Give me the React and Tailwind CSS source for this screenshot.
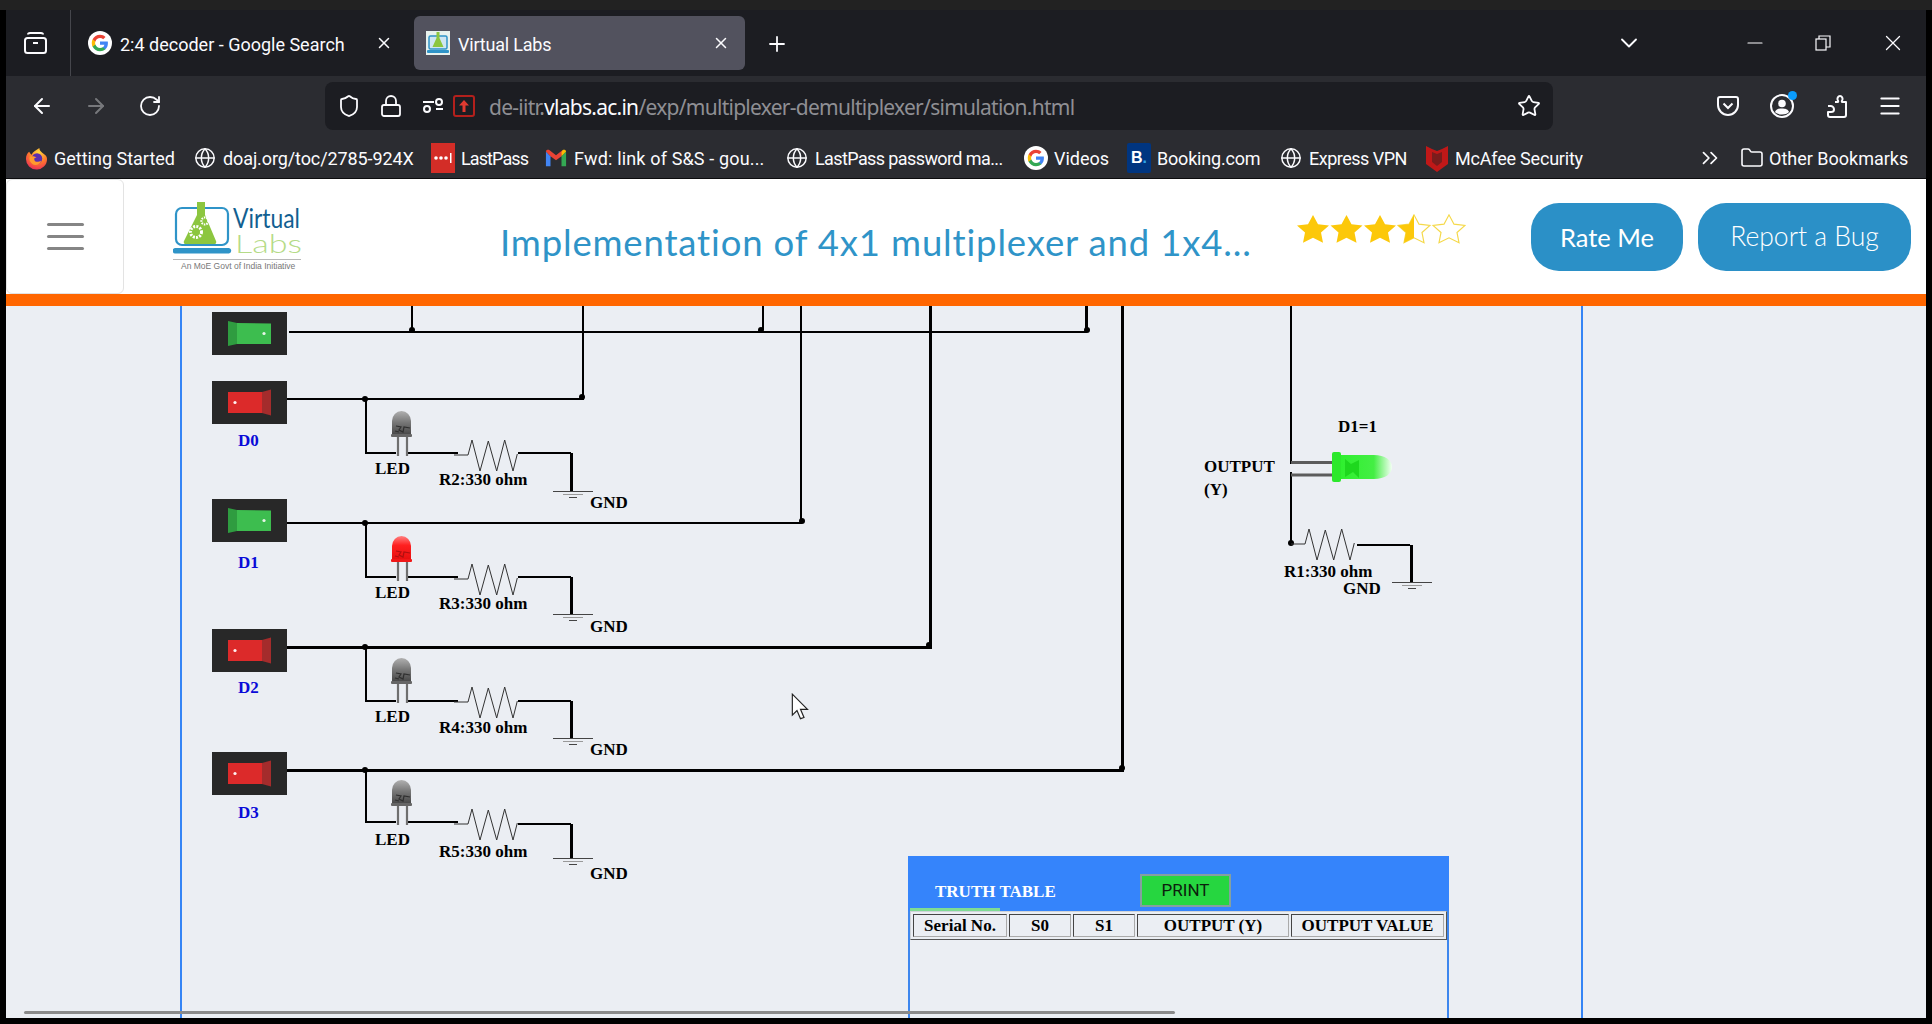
import { ArrowLeft, ArrowRight, RotateCw, Shield, Lock, Star, ChevronDown, ChevronsRight, Plus, X, Minus, Menu, Globe, Folder } from 'lucide-react';

const chromeFont = "font-['Roboto',sans-serif]";
const serif = "font-['Liberation_Serif',serif]";

function GoogleIcon() {
  return (
    <svg viewBox="0 0 24 24" className="w-[24px] h-[24px] shrink-0">
      <circle cx="12" cy="12" r="12" fill="#fff" />
      <g transform="translate(3 3) scale(0.75)">
        <path fill="#4285F4" d="M22.56 12.25c0-.78-.07-1.53-.2-2.25H12v4.26h5.92c-.26 1.37-1.04 2.53-2.21 3.31v2.77h3.57c2.08-1.92 3.28-4.74 3.28-8.09z" />
        <path fill="#34A853" d="M12 23c2.97 0 5.46-.98 7.28-2.66l-3.57-2.77c-.98.66-2.23 1.06-3.71 1.06-2.86 0-5.29-1.93-6.16-4.53H2.18v2.84C3.99 20.53 7.7 23 12 23z" />
        <path fill="#FBBC05" d="M5.84 14.09c-.22-.66-.35-1.36-.35-2.09s.13-1.43.35-2.09V7.07H2.18C1.43 8.55 1 10.22 1 12s.43 3.45 1.18 4.93l2.85-2.22.81-.62z" />
        <path fill="#EA4335" d="M12 5.38c1.62 0 3.06.56 4.21 1.64l3.15-3.15C17.45 2.09 14.97 1 12 1 7.7 1 3.99 3.47 2.18 7.07l3.66 2.84c.87-2.6 3.3-4.53 6.16-4.53z" />
      </g>
    </svg>
  );
}

function FirefoxIcon() {
  return (
    <svg viewBox="0 0 24 24" className="w-[23px] h-[25px] shrink-0">
      <defs>
        <radialGradient id="ffo" cx="0.6" cy="0.2" r="0.9">
          <stop offset="0" stopColor="#ffd83d" />
          <stop offset="0.5" stopColor="#ff7a2b" />
          <stop offset="1" stopColor="#e8215f" />
        </radialGradient>
      </defs>
      <path d="M12 23.500a11 11 0 0 1-11-11C1 9 2.500 6 4.500 5c.5 1.500 1.500 2.500 2.500 3 1-3 4-4 8-7 0 2 1 3 3 5 3 2 5 3.500 5 6.500A10.500 11 0 0 1 12 23.500z" fill="url(#ffo)" />
      <circle cx="12.500" cy="12" r="5.500" fill="#5b2fb0" />
      <path d="M5 10c3-1 6 0 7 1-2 0-3 1-2 3s4 2 7 0c-1 4-6 6-9 4-3-2-4-5-3-8z" fill="#ff9a2e" />
    </svg>
  );
}

function LabsFavicon() {
  return (
    <svg viewBox="0 0 24 24" className="w-[24px] h-[24px] shrink-0">
      <rect width="24" height="24" fill="#e8f2ee" />
      <rect x="3" y="5" width="18" height="13" rx="1.500" fill="#cfe6f2" stroke="#2f94c8" strokeWidth="1.500" />
      <rect x="1" y="19" width="22" height="3" rx="1" fill="#2f94c8" />
      <path d="M10.500 1h3v6l4 9h-11l4-9z" fill="#8cc63f" />
    </svg>
  );
}

function LastPassIcon() {
  return (
    <svg viewBox="0 0 24 30" className="w-[24px] h-[30px] shrink-0">
      <rect width="24" height="30" fill="#d32d27" />
      <circle cx="5" cy="15" r="1.800" fill="#fff" />
      <circle cx="10" cy="15" r="1.800" fill="#fff" />
      <circle cx="15" cy="15" r="1.800" fill="#fff" />
      <rect x="19" y="10" width="1.500" height="10" fill="#fff" />
    </svg>
  );
}

function GmailIcon() {
  return (
    <svg viewBox="0 0 24 24" className="w-[22px] h-[24px] shrink-0">
      <path d="M1 5v16h5V10z" fill="#4285f4" />
      <path d="M23 5v16h-5V10z" fill="#34a853" />
      <path d="M1 5c0-2 2.500-2.500 4-1.500l7 5.500 7-5.500L18 10l-6 4.500L6 10z" fill="#ea4335" />
      <path d="M18 10l5-5c0-2-2.500-2.500-4-1.500L18 6z" fill="#fbbc04" />
    </svg>
  );
}

function BookingIcon() {
  return (
    <div className="w-[24px] h-[30px] shrink-0 rounded-[2px] bg-[#003580] flex items-center justify-center font-['Liberation_Sans',sans-serif] font-bold text-[16px] text-white">
      B<span className="text-[#2fa4e7]">.</span>
    </div>
  );
}

function McAfeeIcon() {
  return (
    <svg viewBox="0 0 22 28" className="w-[22px] h-[28px] shrink-0">
      <path d="M0 2l6 3 5 2 5-2 6-3v18l-11 8L0 20z" fill="#c01818" />
      <path d="M6 8l5 2 5-2v10l-5 4-5-4z" fill="#7a1c1c" />
    </svg>
  );
}

function ArchiveIcon() {
  return (
    <svg viewBox="0 0 25 24" fill="none" stroke="#fbfbfe" strokeWidth="2" className="w-[25px] h-[24px] shrink-0">
      <path d="M5 3.500c0-1 1-1.500 2-1.500h11c1 0 2 .5 2 1.500" />
      <rect x="2" y="7" width="21" height="15" rx="2.500" />
      <path d="M10 12h5" />
    </svg>
  );
}

function PermIcon() {
  return (
    <svg viewBox="0 0 24 24" fill="none" stroke="#fbfbfe" strokeWidth="2" className="w-[24px] h-[24px] shrink-0">
      <path d="M2 8h11M15 15h7" />
      <circle cx="18" cy="8" r="3" />
      <circle cx="6" cy="15" r="3" />
    </svg>
  );
}

function UploadIcon() {
  return (
    <div className="w-[22px] h-[22px] shrink-0 rounded-[3px] border-2 border-[#b3201c] flex items-center justify-center">
      <svg viewBox="0 0 14 14" className="w-[14px] h-[14px]">
        <path d="M7 1l5 5.500H8.500V13h-3V6.500H2z" fill="#e03a30" />
      </svg>
    </div>
  );
}

function PocketIcon() {
  return (
    <svg viewBox="0 0 24 24" fill="none" stroke="#fbfbfe" strokeWidth="2" className="w-[24px] h-[24px] shrink-0">
      <path d="M4 3h16a2 2 0 0 1 2 2v6a10 10 0 0 1-20 0V5a2 2 0 0 1 2-2z" />
      <path d="M7.500 9.500L12 14l4.500-4.500" />
    </svg>
  );
}

function AccountIcon() {
  return (
    <div className="relative w-[24px] h-[24px] shrink-0">
      <svg viewBox="0 0 24 24" fill="none" className="w-[24px] h-[24px]">
        <circle cx="12" cy="12" r="11" stroke="#fbfbfe" strokeWidth="2" />
        <circle cx="12" cy="9.500" r="3.800" fill="#fbfbfe" />
        <path d="M5 18c1-3 4-3.500 7-3.500s6 .5 7 3.500c-2 1.800-4 2.500-7 2.500s-5-.7-7-2.500z" fill="#fbfbfe" />
      </svg>
      <span className="absolute -top-[3px] -right-[3px] w-[9px] h-[9px] rounded-full bg-[#0a9dff]" />
    </div>
  );
}

function ExtensionIcon() {
  return (
    <svg viewBox="0 0 24 24" fill="none" stroke="#fbfbfe" strokeWidth="2" strokeLinejoin="round" className="w-[24px] h-[24px] shrink-0">
      <path d="M10 8h2.500c1 0 .8-1 .3-1.800C11.800 4.500 13 2 15 2s3.200 2.500 2.200 4.200c-.5.8-.7 1.800.3 1.800H21v13a2 2 0 0 1-2 2H5a2 2 0 0 1-2-2v-3h3c2 0 3-1.300 3-2.500S8 12 6 12H3" />
    </svg>
  );
}

const BOOKMARKS = [
  { icon: <FirefoxIcon />, label: 'Getting Started', cls: 'ml-[19px]', w: 'w-[120px]' },
  { icon: <Globe size={22} strokeWidth={1.6} />, label: 'doaj.org/toc/2785-924X', cls: 'ml-[20px]', w: 'w-[191px] tracking-[-0.1px]' },
  { icon: <LastPassIcon />, label: 'LastPass', cls: 'ml-[18px]', w: 'w-[64px] tracking-[-0.9px]' },
  { icon: <GmailIcon />, label: 'Fwd: link of S&S - gou...', cls: 'ml-[20px]', w: 'w-[190px] tracking-[0.15px]' },
  { icon: <Globe size={22} strokeWidth={1.6} />, label: 'LastPass password ma...', cls: 'ml-[22px]', w: 'w-[188px] tracking-[-0.6px]' },
  { icon: <GoogleIcon />, label: 'Videos', cls: 'ml-[22px]', w: 'w-[53px]' },
  { icon: <BookingIcon />, label: 'Booking.com', cls: 'ml-[21px]', w: 'w-[102px] tracking-[-0.2px]' },
  { icon: <Globe size={22} strokeWidth={1.6} />, label: 'Express VPN', cls: 'ml-[21px]', w: 'w-[97px] tracking-[-0.5px]' },
  { icon: <McAfeeIcon />, label: 'McAfee Security', cls: 'ml-[20px]', w: 'w-[128px] tracking-[-0.2px]' },
];

function BrowserChrome() {
  return (
    <div className={`${chromeFont} text-[#fbfbfe] text-[18px] shrink-0`}>
      <div className="flex items-center h-[66px] bg-[#1c1d22]">
        <div className="ml-[17px]"><ArchiveIcon /></div>
        <div className="ml-[22px] w-px h-full bg-[#45464c]" />
        <div className="ml-[17px]"><GoogleIcon /></div>
        <span className="ml-[8px] mt-[2px] w-[226px] whitespace-nowrap">2:4 decoder - Google Search</span>
        <X size={18} className="ml-[29px]" />
        <div className="ml-[21px] w-[331px] h-[54px] rounded-md bg-[#52525e] flex items-center pl-[12px] pr-[15px]">
          <LabsFavicon />
          <span className="ml-[8px] mt-[2px] tracking-[-0.2px]">Virtual Labs</span>
          <X size={18} className="ml-auto" />
        </div>
        <Plus size={24} strokeWidth={1.8} className="ml-[20px] mt-[1px]" />
        <ChevronDown size={28} strokeWidth={1.6} className="ml-[826px]" />
        <Minus size={24} strokeWidth={1.2} className="ml-[100px]" />
        <svg viewBox="0 0 16 16" fill="none" stroke="#fbfbfe" strokeWidth="1.200" className="ml-[48px] w-[16px] h-[16px]">
          <rect x="1" y="4" width="10" height="11" />
          <path d="M4 4V1h11v11h-4" />
        </svg>
        <X size={26} strokeWidth={1.2} className="ml-[49px]" />
      </div>

      <div className="flex items-center h-[54px] pt-[6px] bg-[#2b2c31]">
        <ArrowLeft size={24} strokeWidth={2} className="ml-[24px]" />
        <ArrowRight size={24} strokeWidth={2} className="ml-[30px] text-[#77787c]" />
        <RotateCw size={24} strokeWidth={1.8} className="ml-[30px]" />
        <div className="ml-[163px] w-[1228px] h-[48px] rounded-lg bg-[#1c1d22] flex items-center pl-[12px] pr-[12px]">
          <Shield size={24} strokeWidth={1.8} />
          <Lock size={24} strokeWidth={1.8} className="ml-[18px]" />
          <div className="ml-[18px]"><PermIcon /></div>
          <div className="ml-[8px]"><UploadIcon /></div>
          <div className="ml-[14px] mt-[3px] text-[21px] text-[#8f8f94] font-['Noto_Sans',sans-serif] tracking-[-0.73px] whitespace-nowrap">
            de-iitr.<span className="text-[#fbfbfe]">vlabs.ac.in</span>/exp/multiplexer-demultiplexer/simulation.html
          </div>
          <Star size={24} strokeWidth={1.8} className="ml-auto" />
        </div>
        <div className="ml-[163px]"><PocketIcon /></div>
        <div className="ml-[30px]"><AccountIcon /></div>
        <div className="ml-[31px]"><ExtensionIcon /></div>
        <Menu size={26} strokeWidth={1.8} className="ml-[28px]" />
      </div>

      <div className="flex items-center h-[49px] pt-[8px] bg-[#2b2c31] border-b border-[#0c0c0e]">
        {BOOKMARKS.map((b) => (
          <div key={b.label} className={`flex items-center shrink-0 ${b.cls}`}>
            <div className="w-[22px] flex justify-center">{b.icon}</div>
            <span className={`ml-[7px] whitespace-nowrap ${b.w}`}>{b.label}</span>
          </div>
        ))}
        <ChevronsRight size={26} strokeWidth={1.6} className="ml-[114px]" />
        <Folder size={24} strokeWidth={1.6} className="ml-[17px]" />
        <span className="ml-[5px] whitespace-nowrap">Other Bookmarks</span>
      </div>
    </div>
  );
}

function Logo() {
  return (
    <svg viewBox="0 0 130 72" className="ml-[49px] w-[130px] h-[72px] shrink-0">
      <rect x="3" y="7" width="52" height="37" rx="6" fill="#fff" stroke="#2f94c8" strokeWidth="2.200" />
      <path d="M2 47h54a2.800 2.800 0 0 1 0 5.500H2a2.800 2.800 0 0 1 0-5.500z" fill="#2f94c8" />
      <path d="M24 1h8v13l11 26a2 2 0 0 1-2 3H13a2 2 0 0 1-2-3l13-26z" fill="#8cc63f" />
      <circle cx="23" cy="31" r="5.500" fill="none" stroke="#fff" strokeWidth="3" strokeDasharray="2 1.200" />
      <circle cx="32" cy="20" r="3.500" fill="none" stroke="#fff" strokeWidth="2.200" strokeDasharray="1.500 1" />
      <text x="60" y="27" textLength="67" lengthAdjust="spacingAndGlyphs" fontFamily="Lato, sans-serif" fontSize="26" fill="#125f91">Virtual</text>
      <text x="62" y="52" textLength="67" lengthAdjust="spacingAndGlyphs" fontFamily="Lato, sans-serif" fontWeight="300" fontSize="26" fill="#b5db87">Labs</text>
      <rect x="0" y="58" width="128" height="1" fill="#b8b8b8" />
      <text x="8" y="68" fontFamily="Liberation Sans, sans-serif" fontSize="8.500" fill="#777">An MoE Govt of India Initiative</text>
    </svg>
  );
}

const STAR = 'M17 1l5 10.500 11 1.500-8 8 2 11.500L17 27 7 32.500 9 21l-8-8 11-1.500z';

function Rating() {
  return (
    <svg viewBox="0 0 170 34" preserveAspectRatio="none" className="ml-[45px] mb-[16px] w-[170px] h-[30px] shrink-0">
      <defs>
        <clipPath id="halfstar"><rect x="0" y="0" width="17" height="34" /></clipPath>
      </defs>
      {[0, 1, 2].map((i) => (
        <path key={i} d={STAR} transform={`translate(${i * 33.500} 0)`} fill="#fcc80a" />
      ))}
      <g transform="translate(101 0)">
        <path d={STAR} fill="#fff" stroke="#f5d94a" strokeWidth="1.200" />
        <path d={STAR} fill="#fcc80a" clipPath="url(#halfstar)" />
      </g>
      <path d={STAR} transform="translate(136 0)" fill="#fff" stroke="#f5d94a" strokeWidth="1.200" />
    </svg>
  );
}

function SiteHeader() {
  return (
    <div className="flex items-center h-[115px] bg-white shrink-0 font-['Lato',sans-serif]">
      <div className="w-[118px] h-full rounded-md border border-[#e3e3e3] flex flex-col items-center justify-center gap-[9px] shrink-0">
        <span className="w-[37px] h-[3px] rounded bg-[#858585]" />
        <span className="w-[37px] h-[3px] rounded bg-[#858585]" />
        <span className="w-[37px] h-[3px] rounded bg-[#858585]" />
      </div>
      <Logo />
      <div className="ml-[197px] w-[751px] pt-[12px] text-[36.5px] tracking-[0.84px] text-[#2f94c8] whitespace-nowrap shrink-0">
        Implementation of 4x1 multiplexer and 1x4...
      </div>
      <Rating />
      <button className="ml-[65px] mt-[1px] w-[152px] h-[68px] rounded-[28px] bg-[#2b90c7] text-white text-[25.500px] shrink-0">Rate Me</button>
      <button className="ml-[15px] w-[213px] h-[68px] rounded-[28px] bg-[#2b90c7] text-white text-[26.500px] font-light shrink-0">Report a Bug</button>
    </div>
  );
}

function Switch({ y, on }) {
  return (
    <g transform={`translate(212 ${y})`}>
      <rect width="75" height="43" fill="#282828" />
      {on ? (
        <>
          <polygon points="16,9 25,11 25,32 16,34" fill="#2f9c40" />
          <polygon points="25,11 59,11.500 59,32 25,32" fill="#3dbd4f" />
          <circle cx="52" cy="21.500" r="1.600" fill="#e8f5e8" />
        </>
      ) : (
        <>
          <polygon points="16,11 50,11 50,32 16,32" fill="#dc2a2a" />
          <polygon points="50,11 59,8.500 59,34.500 50,32" fill="#a42c2c" />
          <circle cx="23" cy="21.500" r="1.600" fill="#fff0f0" />
        </>
      )}
    </g>
  );
}

function Led({ y, lit }) {
  const id = lit ? 'ledRed' : 'ledGray';
  return (
    <g transform={`translate(389 ${y})`}>
      <path d="M9 26v19M18 26v19" stroke="#6f6f6f" strokeWidth="2.200" fill="none" />
      <path d="M3 23V10a9.500 10 0 0 1 19 0v13z" fill={`url(#${id})`} />
      <rect x="2" y="23" width="21" height="3" rx="1" fill={lit ? '#f01818' : '#666'} />
      <path d="M7 15l5 1-2 3 4 2 1-5 6 1M6 20l4 1" stroke={lit ? '#b01010' : '#2f2f2f'} strokeWidth="1.200" fill="none" />
    </g>
  );
}

function Resistor({ x, y }) {
  return (
    <polyline
      transform={`translate(${x} ${y})`}
      points="0,0 14,0 18,-15 26,16 34.300,-14 42.700,16 50.700,-15 59,16 63.300,-1"
      fill="none"
      stroke="#333"
      strokeWidth="1"
    />
  );
}

function Ground({ x, y }) {
  return (
    <g stroke="#444" strokeWidth="1" shapeRendering="crispEdges">
      <line x1={x - 20} x2={x + 20} y1={y} y2={y} />
      <line x1={x - 10} x2={x + 10} y1={y + 3} y2={y + 3} stroke="#999" />
      <line x1={x - 4} x2={x + 4} y1={y + 6} y2={y + 6} />
    </g>
  );
}

const ROWS = [
  { sw: 381, on: false, wire: 399, branch: 453, led: 411, lit: false, res: 455, right: 453, gnd: 491 },
  { sw: 499, on: true, wire: 523, branch: 577, led: 536, lit: true, res: 579, right: 577, gnd: 614 },
  { sw: 629, on: false, wire: 647, branch: 701, led: 658, lit: false, res: 702, right: 701, gnd: 738 },
  { sw: 752, on: false, wire: 770, branch: 822, led: 780, lit: false, res: 824, right: 824, gnd: 858 },
];

const ENDS = [
  { x: 583, w: 2, dot: 582 },
  { x: 801, w: 2, dot: 802 },
  { x: 930, w: 3, dot: 929 },
  { x: 1122, w: 3, dot: 1122 },
];

function Circuit() {
  return (
    <svg viewBox="6 306 1920 712" className="absolute inset-0 w-full h-full">
      <defs>
        <linearGradient id="ledGray" x1="0" y1="0" x2="0" y2="1">
          <stop offset="0" stopColor="#b0b0b0" />
          <stop offset="0.5" stopColor="#777" />
          <stop offset="1" stopColor="#4a4a4a" />
        </linearGradient>
        <linearGradient id="ledRed" x1="0" y1="0" x2="0" y2="1">
          <stop offset="0" stopColor="#ff8080" />
          <stop offset="0.4" stopColor="#ff2020" />
          <stop offset="1" stopColor="#e81010" />
        </linearGradient>
        <linearGradient id="ledGreen" x1="0" y1="0" x2="1" y2="0">
          <stop offset="0" stopColor="#2ef02e" />
          <stop offset="0.65" stopColor="#44ee44" />
          <stop offset="1" stopColor="#f2fff2" />
        </linearGradient>
      </defs>

      {/* select line S */}
      <Switch y={312} on />
      <g stroke="#000" fill="none" shapeRendering="crispEdges">
        <path d="M289 332H1087" strokeWidth="2" />
        <path d="M412 306V330M763 306V330" strokeWidth="2" />
        <path d="M1086 306V330" strokeWidth="3" />
      </g>
      <circle cx="412" cy="330" r="3" />
      <circle cx="761" cy="330" r="3" />
      <circle cx="1087" cy="330" r="3" />

      {ROWS.map((r, i) => (
        <g key={r.sw}>
          <Switch y={r.sw} on={r.on} />
          <g stroke="#000" fill="none" shapeRendering="crispEdges">
            <path d={`M287 ${r.wire}H${ENDS[i].x}V306`} strokeWidth={ENDS[i].w} />
            <path d={`M366 ${r.wire}V${r.branch}H396M408 ${r.branch}H458`} strokeWidth="2" />
            <path d={`M518 ${r.right}H571`} strokeWidth="2" />
            <path d={`M571 ${r.right}V${r.gnd}`} strokeWidth="3" />
          </g>
          <circle cx="365" cy={r.wire} r="3" />
          <circle cx={ENDS[i].dot} cy={r.wire - 2} r="3" />
          <Led y={r.led} lit={r.lit} />
          <Resistor x={454} y={r.res} />
          <Ground x={573} y={r.gnd} />
        </g>
      ))}

      {/* output side */}
      <g stroke="#000" fill="none" shapeRendering="crispEdges">
        <path d="M1291 306V464M1291 472V543" strokeWidth="2" />
        <path d="M1357 545H1410" strokeWidth="2" />
        <path d="M1411 545V583" strokeWidth="3" />
      </g>
      <path d="M1291 462.500H1332M1291 475H1332" stroke="#5c5c5c" strokeWidth="3" />
      <path d="M1340 455H1374C1385 455 1392 460 1392 467C1392 474 1385 479 1374 479H1340z" fill="url(#ledGreen)" />
      <rect x="1332" y="452" width="9" height="30" rx="2" fill="#2ce82c" />
      <path d="M1345 459l6 5 8-4v18l-6-6-8 5" fill="#1ed81e" />
      <circle cx="1291" cy="543" r="3" />
      <Resistor x={1291} y={544} />
      <Ground x={1412} y={582} />
    </svg>
  );
}

const LABELS = [
  { t: 'D0', c: 'left-[232px] top-[126px] text-[#0a0ad8]' },
  { t: 'D1', c: 'left-[232px] top-[248px] text-[#0a0ad8]' },
  { t: 'D2', c: 'left-[232px] top-[373px] text-[#0a0ad8]' },
  { t: 'D3', c: 'left-[232px] top-[498px] text-[#0a0ad8]' },
  { t: 'LED', c: 'left-[369px] top-[154px]' },
  { t: 'LED', c: 'left-[369px] top-[278px]' },
  { t: 'LED', c: 'left-[369px] top-[402px]' },
  { t: 'LED', c: 'left-[369px] top-[525px]' },
  { t: 'R2:330 ohm', c: 'left-[433px] top-[165px]' },
  { t: 'R3:330 ohm', c: 'left-[433px] top-[289px]' },
  { t: 'R4:330 ohm', c: 'left-[433px] top-[413px]' },
  { t: 'R5:330 ohm', c: 'left-[433px] top-[537px]' },
  { t: 'GND', c: 'left-[584px] top-[188px]' },
  { t: 'GND', c: 'left-[584px] top-[312px]' },
  { t: 'GND', c: 'left-[584px] top-[435px]' },
  { t: 'GND', c: 'left-[584px] top-[559px]' },
  { t: 'D1=1', c: 'left-[1332px] top-[112px]' },
  { t: 'OUTPUT', c: 'left-[1198px] top-[152px]' },
  { t: '(Y)', c: 'left-[1198px] top-[175px]' },
  { t: 'R1:330 ohm', c: 'left-[1278px] top-[257px]' },
  { t: 'GND', c: 'left-[1337px] top-[274px]' },
];

const COLUMNS = [
  { t: 'Serial No.', w: 'w-[94px]' },
  { t: 'S0', w: 'w-[62px]' },
  { t: 'S1', w: 'w-[62px]' },
  { t: 'OUTPUT (Y)', w: 'w-[152px]' },
  { t: 'OUTPUT VALUE', w: 'w-[153px]' },
];

function TruthTable() {
  return (
    <div className="absolute left-[902px] top-[550px] bottom-0 w-[541px] border-x-2 border-[#3d86ee]">
      <div className="relative flex items-start h-[55px] -mx-[2px] bg-[#3584fb]">
        <div className={`ml-[27px] mt-[27px] w-[205px] ${serif} font-bold text-[17px] leading-[18px] text-white`}>TRUTH TABLE</div>
        <button className="mt-[18px] pt-[1px] w-[91px] h-[33px] bg-[#26d640] border-2 border-[#84a0a0] font-['Roboto',sans-serif] text-[17px] text-[#0c200c]">PRINT</button>
        <span className="absolute left-[2px] bottom-0 w-[90px] h-[3px] bg-[#7fdc94]" />
      </div>
      <table className={`w-[537px] table-fixed border-separate border-spacing-[2px] border-t border-l border-b border-r border-t-[#cfd3d8] border-l-[#cfd3d8] border-b-[#555] border-r-[#555] ${serif} font-bold text-[17px] text-black`}>
        <thead>
          <tr>
            {COLUMNS.map((c) => (
              <th key={c.t} className={`${c.w} h-[23px] p-0 font-bold border border-t-[#444] border-l-[#444] border-b-[#aaa] border-r-[#aaa] whitespace-nowrap leading-[18px]`}>{c.t}</th>
            ))}
          </tr>
        </thead>
      </table>
    </div>
  );
}

function Simulation() {
  return (
    <div className="relative flex-1 bg-[#ebeef3] overflow-hidden">
      <Circuit />
      <div className="absolute left-[174px] top-0 bottom-0 w-[1403px] border-x-2 border-[#3584f5]" />
      {LABELS.map((l) => (
        <span key={l.t + l.c} className={`absolute ${l.c} ${serif} font-bold text-[17px] leading-[18px] whitespace-nowrap`}>{l.t}</span>
      ))}
      <TruthTable />
      <svg viewBox="0 0 16 24" className="absolute left-[785px] top-[387px] w-[19px] h-[28px]">
        <path d="M1 1v18l4-4 3 7 3-1-3-7h6z" fill="#fff" stroke="#222" strokeWidth="1" />
      </svg>
      <div className="absolute left-[18px] bottom-[4px] w-[1151px] h-[3px] rounded bg-[#8a8a8a]" />
    </div>
  );
}

export default function App() {
  return (
    <div className="w-[1932px] h-[1024px] bg-black flex flex-col overflow-hidden">
      <div className="h-[10px] bg-[#222222] shrink-0" />
      <div className="flex-1 min-h-0 flex flex-col mx-[6px] mb-[6px]">
        <BrowserChrome />
        <SiteHeader />
        <div className="h-[12px] bg-[#ff6600] shrink-0" />
        <Simulation />
      </div>
    </div>
  );
}
